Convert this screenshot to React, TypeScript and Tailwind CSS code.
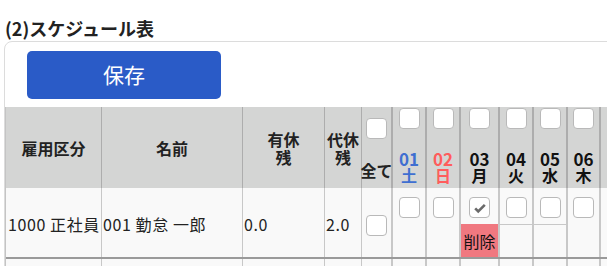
import React from "react";

const FONT = { fontFamily: '"Noto Sans CJK JP", "Noto Sans", sans-serif' };

const Box = ({ checked }: { checked?: boolean }) => (
  <span className="flex h-[21px] w-[21px] shrink-0 items-end justify-center rounded-[4px] border border-[#b9b9b9] bg-white">
    {checked && (
      <svg viewBox="0 0 16 16" className="mb-[2px] h-[14px] w-[14px]">
        <path d="M2.5 8.5 L6 12 L13.5 4.5" stroke="#6a6a6a" strokeWidth="3" fill="none" />
      </svg>
    )}
  </span>
);

const COLS =
  "grid grid-cols-[96px_141px_82px_37px_31px_34px_34px_39px_34px_34px_33px_34px]";

const days = [
  { d: "01", w: "土", c: "text-[#3f6fd1]" },
  { d: "02", w: "日", c: "text-[#ff5c5c]" },
  { d: "03", w: "月", c: "text-[#111]" },
  { d: "04", w: "火", c: "text-[#111]" },
  { d: "05", w: "水", c: "text-[#111]" },
  { d: "06", w: "木", c: "text-[#111]" },
  { d: "07", w: "金", c: "text-[#111]" },
];

export default function App() {
  return (
    <div className="h-[266px] w-[607px] overflow-hidden bg-white text-[#222]" style={FONT}>
      <div className="pl-[5px] pt-[15px] text-[18px] font-bold leading-[27px]">(2)スケジュール表</div>
      <div className="ml-[4px] mt-[-1px] w-[700px] rounded-[8px] border border-[#dcdcdc] pt-[9px]">
        <button className="ml-[22px] flex h-[48px] w-[194px] items-center justify-center rounded-[5px] bg-[#2a5bc7] text-[21px] text-white">
          保存
        </button>
        <div className="mt-[8px] border-l border-[#c4c4c4]">
          {/* header */}
          <div className={`${COLS} h-[81px] bg-[#d4d5d4] text-[16px] font-bold leading-[18px]`}>
            <div className="flex items-center justify-center border-r border-[#adadad] pt-[1px]">雇用区分</div>
            <div className="flex items-center justify-center border-r border-[#adadad] pt-[1px]">名前</div>
            <div className="flex items-center justify-center border-r border-[#adadad] pt-[1px] text-center">
              有休
              <br />
              残
            </div>
            <div className="flex items-center justify-center border-r border-[#adadad] text-center">
              代休
              <br />
              残
            </div>
            <div className="flex flex-col items-center border-r-2 border-[#adadad] pt-[11px]">
              <Box />
              <span className="mt-[23px] whitespace-nowrap leading-[17px]">全て</span>
            </div>
            {days.map((x) => (
              <div key={x.d} className="flex flex-col items-center border-r-2 border-[#adadad] pt-[1px]">
                <Box />
                <span className={`mt-[21px] text-[17px] leading-[17px] ${x.c}`}>{x.d}</span>
                <span className={`leading-[17px] ${x.c}`}>{x.w}</span>
              </div>
            ))}
          </div>
          {/* body row */}
          <div className={`${COLS} h-[71px] border-b-2 border-[#9a9a9a] bg-[#f9f9f9] text-[16px] leading-[18px] tracking-[0.6px]`}>
            <div className="flex items-center whitespace-nowrap border-r border-[#c8c8c8] pl-[2px] pt-[3px]">1000 正社員</div>
            <div className="flex items-center whitespace-nowrap border-r border-[#c8c8c8] pl-[1px] pt-[3px]">001 勤怠 一郎</div>
            <div className="flex items-center border-r border-[#c8c8c8] pl-[1px] pt-[3px]">0.0</div>
            <div className="flex items-center border-r border-[#c8c8c8] pl-[1px] pt-[3px]">2.0</div>
            <div className="flex items-center justify-center border-r-2 border-[#c8c8c8] pt-[5px]">
              <Box />
            </div>
            {days.map((x, i) => (
              <div key={x.d} className="flex flex-col border-r-2 border-[#c8c8c8]">
                <div className="flex h-[36px] justify-center pt-[9px]">
                  <Box checked={i === 2} />
                </div>
                {i === 2 ? (
                  <div className="flex flex-1 items-center justify-center bg-[#f07880] tracking-normal text-[#111]">削除</div>
                ) : i === 3 || i === 4 ? (
                  <div className="flex-1 border-t border-[#c8c8c8]" />
                ) : (
                  <div className="flex-1" />
                )}
              </div>
            ))}
          </div>
          {/* next row */}
          <div className={`${COLS} h-[40px] bg-[#f9f9f9]`}>
            {Array.from({ length: 12 }).map((_, i) => (
              <div
                key={i}
                className={i >= 4 ? "border-r-2 border-[#c8c8c8]" : "border-r border-[#c8c8c8]"}
              />
            ))}
          </div>
        </div>
      </div>
    </div>
  );
}
